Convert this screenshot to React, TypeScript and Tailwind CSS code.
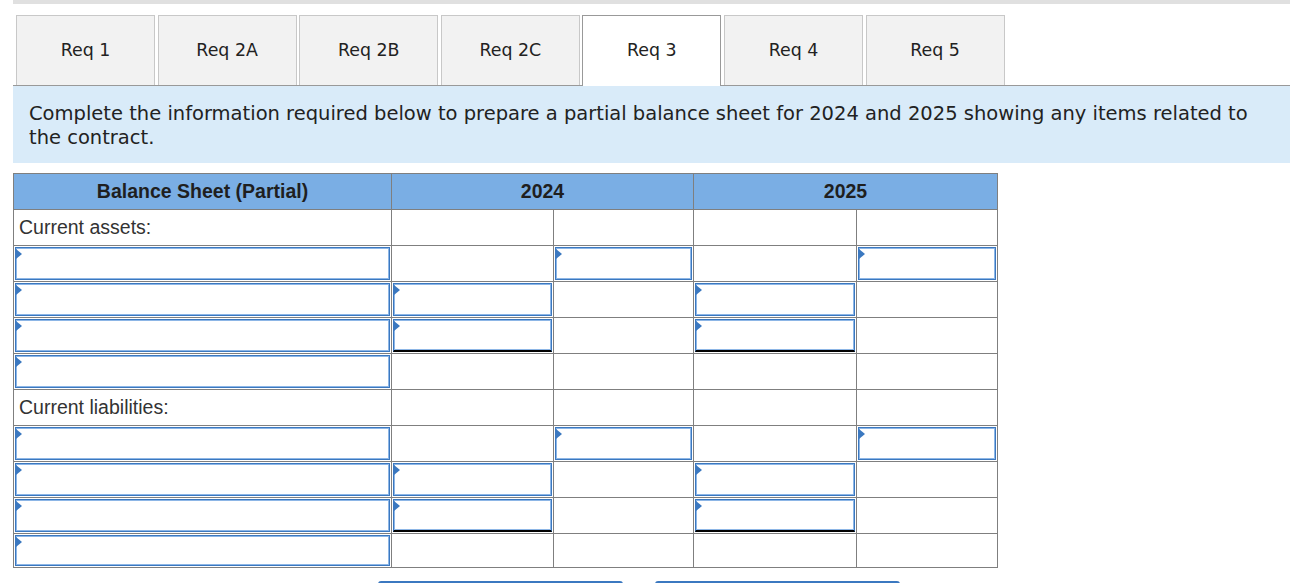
import React from 'react';

const TABS = ['Req 1', 'Req 2A', 'Req 2B', 'Req 2C', 'Req 3', 'Req 4', 'Req 5'];
const ACTIVE = 'Req 3';

// which columns (1..5) hold an input box, per row
type Row = { label?: string; inputs: number[]; totals?: number[] };
const ROWS: Row[] = [
  { label: 'Current assets:', inputs: [] },
  { inputs: [1, 3, 5] },
  { inputs: [1, 2, 4] },
  { inputs: [1, 2, 4], totals: [2, 4] },
  { inputs: [1] },
  { label: 'Current liabilities:', inputs: [] },
  { inputs: [1, 3, 5] },
  { inputs: [1, 2, 4] },
  { inputs: [1, 2, 4], totals: [2, 4] },
  { inputs: [1] },
];

const COL_W = ['w-[378px]', 'w-[162px]', 'w-[140px]', 'w-[163px]', 'w-[141px]'];

function InputBox({ total }: { total?: boolean }) {
  return (
    <div
      className={`relative h-full w-full border border-[#3b78c0] shadow-[inset_0_0_0_1px_#8db6e6] bg-white ${
        total ? 'border-b-2 border-b-black' : ''
      }`}
    >
      <span className="absolute left-0 top-[1px] w-0 h-0 border-y-[5px] border-y-transparent border-l-[6px] border-l-[#3b78c0]" />
    </div>
  );
}

export default function App() {
  return (
    <div className="bg-white h-[583px] w-[1315px] overflow-hidden">
      <div className="ml-[13px] w-[1277px]">
        {/* top strip */}
        <div className="h-[4px] bg-[#e0e0e0]" />

        {/* tabs */}
        <div className="mt-[11px] flex border-b border-[#999999] pl-[3px] gap-[2.6px]">
          {TABS.map((t) => {
            const active = t === ACTIVE;
            return (
              <div
                key={t}
                className={`w-[139px] flex items-center justify-center border-x border-t text-[17.4px] text-[#222] ${
                  active ? 'bg-white border-[#999999] -mb-px h-[71px] pb-[1px]' : 'h-[70px] bg-[#f2f2f2] border-[#c8c8c8]'
                }`}
                style={{ fontFamily: '"DejaVu Sans", Verdana, sans-serif' }}
              >
                {t}
              </div>
            );
          })}
        </div>

        {/* instructions */}
        <div
          className="bg-[#d9ebf9] pl-[16px] pr-[20px] pt-[16px] pb-[13px] text-[19.5px] leading-[24px] text-[#222]"
          style={{ fontFamily: '"DejaVu Sans", Verdana, sans-serif' }}
        >
          Complete the information required below to prepare a partial balance sheet for 2024 and 2025 showing any items
          related to the contract.
        </div>

        {/* table */}
        <table
          className="mt-[10px] border-collapse table-fixed w-[984px] text-[19.5px] text-[#333]"
          style={{ fontFamily: '"Liberation Sans", Arial, sans-serif' }}
        >
          <colgroup>
            {COL_W.map((w, i) => (
              <col key={i} className={w} />
            ))}
          </colgroup>
          <thead>
            <tr className="h-[36px] bg-[#7aaee4] text-[#1f1f1f]">
              <th className="border border-[#7f7f7f] font-bold text-center">Balance Sheet (Partial)</th>
              <th colSpan={2} className="border border-[#7f7f7f] font-bold text-center">
                2024
              </th>
              <th colSpan={2} className="border border-[#7f7f7f] font-bold text-center">
                2025
              </th>
            </tr>
          </thead>
          <tbody>
            {ROWS.map((r, ri) => {
              const last = ri === ROWS.length - 1;
              return (
                <tr key={ri} className={last ? 'h-[34px]' : 'h-[36px]'}>
                  {[1, 2, 3, 4, 5].map((c) => {
                    const hasInput = r.inputs.includes(c);
                    return (
                      <td key={c} className={`border border-[#7f7f7f] p-0 align-middle ${last ? 'h-[34px]' : 'h-[36px]'}`}>
                        {c === 1 && r.label ? (
                          <div className="pl-[5px] pb-[1px] leading-[24px]">{r.label}</div>
                        ) : hasInput ? (
                          <div className={`p-[1px] ${last ? 'h-[33px]' : 'h-[35px]'}`}>
                            <InputBox total={r.totals?.includes(c)} />
                          </div>
                        ) : null}
                      </td>
                    );
                  })}
                </tr>
              );
            })}
          </tbody>
        </table>

        {/* nav buttons, cut by the window */}
        <div className="mt-[13px] ml-[365px] flex gap-[32px]">
          <div className="w-[245px] h-[40px] rounded-t-[3px] border-t-2 border-x border-[#3b78c0] bg-white" />
          <div className="w-[245px] h-[40px] rounded-t-[3px] border-t-2 border-x border-[#3b78c0] bg-white" />
        </div>
      </div>
    </div>
  );
}
